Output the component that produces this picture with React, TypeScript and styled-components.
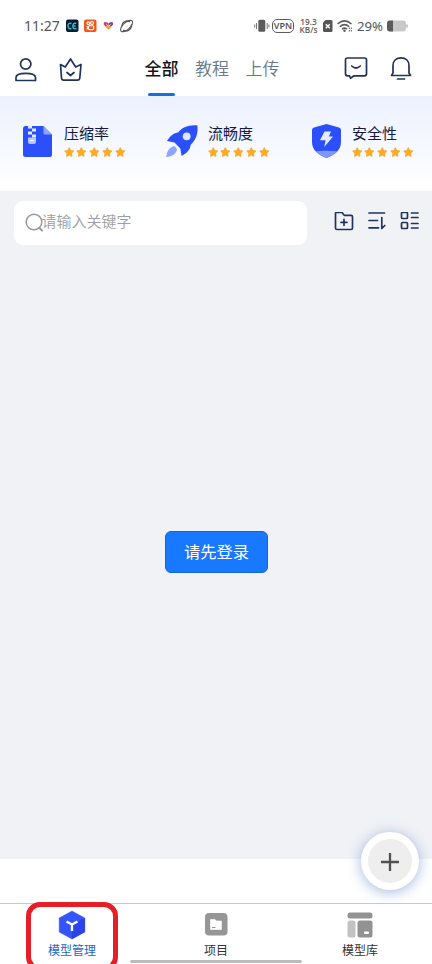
import React from "react";
import styled, { createGlobalStyle } from "styled-components";

const GlobalStyle = createGlobalStyle`
  *, *::before, *::after { box-sizing: border-box; }
  body { margin: 0; background: #fff; }
  svg { display: block; flex: none; }
  button { border: 0; padding: 0; background: none; font: inherit; color: inherit; }
`;

const NAVY = "#20345a";

const Screen = styled.div`
  width: 432px;
  height: 964px;
  overflow: hidden;
  display: flex;
  flex-direction: column;
  background: #fff;
  font-family: Roboto, "Noto Sans CJK SC", sans-serif;
`;

const StatusBar = styled.div`
  height: 42px;
  flex: none;
  padding: 10px 24px 0 24px;
  display: flex;
  align-items: center;
  color: #555;
  font-family: "Noto Sans", sans-serif;
`;
const StatusText = styled.span<{ $size: number; $width: number; $ml?: number }>`
  font-size: ${(p) => p.$size}px;
  width: ${(p) => p.$width}px;
  margin-left: ${(p) => p.$ml ?? 0}px;
  flex: none;
  line-height: 20px;
  white-space: nowrap;
`;
const AppIcons = styled.div`
  display: flex;
  margin: 0 auto 0 6px;
`;
const Vpn = styled.span`
  width: 22px;
  height: 14px;
  flex: none;
  margin-left: 2px;
  border: 1.4px solid #5c5c5c;
  border-radius: 5px;
  font-size: 9px;
  font-weight: 600;
  line-height: 11px;
  text-align: center;
`;
const Speed = styled.div`
  width: 19px;
  flex: none;
  margin: 0 3px 0 5px;
  display: flex;
  flex-direction: column;
  align-items: center;
  font-size: 8.3px;
  font-weight: 500;
  line-height: 8px;
  white-space: nowrap;
`;
const Battery = styled.svg`
  margin-left: 3px;
`;

const Header = styled.header`
  height: 54px;
  flex: none;
  display: flex;
  align-items: stretch;
  padding: 0 19px 0 13px;
`;
const IconGroup = styled.div<{ $gap: number }>`
  display: flex;
  align-items: center;
  gap: ${(p) => p.$gap}px;
`;
const Tabs = styled.nav`
  display: flex;
  gap: 16.5px;
  margin: 0 auto 0 61.5px;
`;
const Tab = styled.button<{ $active?: boolean }>`
  position: relative;
  display: flex;
  align-items: center;
  font-size: 17px;
  line-height: 54px;
  font-weight: ${(p) => (p.$active ? 500 : 350)};
  color: ${(p) => (p.$active ? "#10131c" : "#68788a")};
  &::after {
    content: "";
    display: ${(p) => (p.$active ? "block" : "none")};
    position: absolute;
    left: 3.5px;
    bottom: 0;
    width: 27px;
    height: 3px;
    border-radius: 2px;
    background: #176fdc;
  }
`;

const Banner = styled.section`
  height: 95px;
  flex: none;
  display: grid;
  grid-template-columns: repeat(3, 144px);
  background: linear-gradient(#edf1fe, #f5f8ff 50%, #fefeff 92%);
`;
const Feature = styled.div`
  display: flex;
  align-items: flex-start;
  padding: 27px 0 0 22px;
  gap: 10px;
`;
const FeatureTitle = styled.div`
  font-size: 15px;
  line-height: 20px;
  padding-top: 1px;
  font-weight: 400;
  color: #14193f;
`;
const Stars = styled.div`
  display: flex;
  gap: 2.25px;
  margin: 3px 0 0 -0.5px;
`;

const Content = styled.main`
  height: 668px;
  flex: none;
  display: flex;
  flex-direction: column;
  background: #f1f2f6;
`;
const Toolbar = styled.div`
  display: flex;
  align-items: center;
  height: 63px;
  padding: 0 11px 0 14px;
`;
const SearchBox = styled.div`
  width: 292.5px;
  height: 44px;
  border-radius: 9px;
  background: #fff;
  display: flex;
  align-items: center;
  padding-left: 11px;
  margin-right: auto;
  color: #9c9ea2;
  font-size: 15px;
  line-height: 20px;
  font-weight: 350;
`;
const Placeholder = styled.span`
  margin: -1px 0 0 -1.5px;
`;
const Empty = styled.div`
  flex: 1;
  display: flex;
  justify-content: center;
  align-items: flex-start;
  padding: 277px 0 0 1px;
`;
const LoginButton = styled.button`
  width: 103px;
  height: 42px;
  border: 1px solid #1466d2;
  border-radius: 6px;
  background: #1878ff;
  color: #fff;
  font-size: 16.3px;
  line-height: 40px;
  padding-top: 1px;
  text-align: center;
`;

const Footer = styled.div`
  position: relative;
  height: 44px;
  flex: none;
`;
const Fab = styled.button`
  position: absolute;
  right: 13px;
  top: -27px;
  width: 58px;
  height: 58px;
  border-radius: 50%;
  border: 7px solid #fff;
  background: #eee;
  box-shadow: 0 2px 14px rgba(60, 105, 190, 0.48);
  display: flex;
  align-items: center;
  justify-content: center;
`;

const BottomNav = styled.nav`
  position: relative;
  height: 61px;
  flex: none;
  display: grid;
  grid-template-columns: repeat(3, 144px);
  border-top: 1px solid #c9c9c9;
`;
const NavItem = styled.button<{ $active?: boolean }>`
  display: flex;
  flex-direction: column;
  align-items: center;
  justify-content: flex-start;
  padding-top: 6px;
  gap: 2px;
  font-size: 12px;
  line-height: 18px;
  color: ${(p) => (p.$active ? "#1a68c8" : "#333")};
`;
const Highlight = styled.div`
  position: absolute;
  left: 26px;
  top: -2px;
  width: 92px;
  height: 69px;
  border: 5px solid #e61e28;
  border-radius: 14px;
`;
const HomeIndicator = styled.div`
  position: absolute;
  left: 130px;
  bottom: 1px;
  width: 172px;
  height: 3px;
  border-radius: 2px;
  background: #bcbcbc;
`;

type LineIconProps = { box: string; w: number; h: number; children: React.ReactNode; color?: string; sw?: number };
const LineIcon = ({ box, w, h, children, color = NAVY, sw = 1.7 }: LineIconProps) => (
  <svg width={w} height={h} viewBox={box} fill="none" stroke={color} strokeWidth={sw} strokeLinecap="round" strokeLinejoin="round">
    {children}
  </svg>
);

const Star = () => (
  <svg width="10.500" height="10.500" viewBox="0 0 10 10">
    <path d="M5 .9 6.25 3.45 9.1 3.85 7.05 5.85 7.5 8.7 5 7.4 2.5 8.7 2.95 5.85.9 3.85 3.75 3.45Z" fill="#fbac26" stroke="#fbac26" strokeWidth="1.1" strokeLinejoin="round" />
  </svg>
);

const ZipIcon = () => (
  <svg width="32" height="36" viewBox="22 123 32 36">
    <path d="M25.5 126H43.5L52 134.5V154.500Q52 157 49.500 157H25.500Q23 157 23 154.500V128.500Q23 126 25.500 126Z" fill="#2b50fb" />
    <path d="M43.500 126 52 134.500H45Q43.500 134.500 43.500 133Z" fill="#8ea5ff" />
    <path d="M28 126h4v2.500h-4ZM32 128.500h4v3h-4ZM28 131.500h4v3h-4ZM32 134.500h4v3h-4Z" fill="#e3e9ff" />
    <path d="M28 137.500h8v4.500q0 2-2 2h-4q-2 0-2-2Z" fill="#b5c4ff" />
    <path d="M30 140.500h4" stroke="#f2f4ff" strokeWidth="1.200" />
  </svg>
);
const RocketIcon = () => (
  <svg width="32" height="36" viewBox="166 123 32 36">
    <path d="M197.300 125.300C188 124.500 182 127.500 178 132.500C174.500 132.500 170 136 167 141L174.500 142.500L180.300 148.500L181.600 156C187 153 190.300 149.500 190.600 145C196 140 198.500 133 197.300 125.300Z" fill="#2b50fb" />
    <circle cx="186.700" cy="136.300" r="3.900" fill="#dfe6ff" />
    <path d="M174 146C168.500 147.500 167 152 166.200 157C171 156.500 175.500 155 177 149.500Q176 146.500 174 146Z" fill="#8ea5ff" />
  </svg>
);
const ShieldIcon = () => (
  <svg width="32" height="36" viewBox="310 123 32 36">
    <path d="M326.500 124 339 127.500Q341 128.100 341 130V142C341 150 335 154.500 326.500 158C318 154.500 312 150 312 142V130Q312 128.100 314 127.500Z" fill="#2b50fb" />
    <path d="M315.300 151.300Q326.500 150 337.700 151.300Q333.500 155.300 326.500 158Q319.500 155.300 315.300 151.300Z" fill="#7f98ff" />
    <path d="M324.500 131.500H331L328.800 136.500H333L324.300 147L325.600 140.200H320Z" fill="#e6ecff" />
  </svg>
);

const features = [
  { title: "压缩率", icon: <ZipIcon /> },
  { title: "流畅度", icon: <RocketIcon /> },
  { title: "安全性", icon: <ShieldIcon /> },
];

export default function App() {
  return (
    <Screen>
      <GlobalStyle />
      <StatusBar>
        <StatusText $size={14} $width={36}>11:27</StatusText>
        <AppIcons>
          <svg width="68" height="16" viewBox="66 18 68 16">
            <rect x="66" y="19.500" width="12.500" height="12.500" rx="2" fill="#081c31" />
            <path d="M71.500 23.500Q68 22.500 68 26T71.500 28.500M76.300 23.500Q73 22.500 72.800 26T76.500 28.500M73 26h2.500" fill="none" stroke="#32bdc8" strokeWidth="1.400" />
            <rect x="84" y="19.500" width="12.500" height="12.500" rx="2" fill="#f0561d" />
            <g fill="none" stroke="#fff" strokeWidth="1.100">
              <circle cx="88.300" cy="23.200" r="1.300" />
              <circle cx="92" cy="22.900" r="1.500" />
              <rect x="88.500" y="25.800" width="5.200" height="3.800" rx="1" />
              <path d="m86.700 26 1.800 1.500-1.800 1.800" />
            </g>
            <path d="M108.500 29.500 104 24.800Q103 22.300 105.200 22Q107 21.700 108.500 23.600Z" fill="#d93968" />
            <path d="M108.500 29.500 113 24.800Q113.700 22.300 111.600 22Q110 21.700 108.500 23.600Z" fill="#8b3eb0" />
            <path d="m105.500 26.300 3 3.200 3-3.200-3-1.400Z" fill="#f39a2d" />
            <path d="m106.500 24.300 2 2 2-2" fill="none" stroke="#fff" strokeWidth=".8" />
            <g fill="none" stroke="#5a5a5a" strokeWidth="1.100" strokeLinecap="round">
              <ellipse cx="126.600" cy="26" rx="7.500" ry="3.500" transform="rotate(-42 126.600 26)" />
              <path d="M121.700 26.500C121.700 22.500 126 20 129.500 21.500M123.500 30.500C127.500 32 131.800 29 131.500 25" strokeWidth="1.400" />
            </g>
          </svg>
        </AppIcons>
        <svg width="16" height="16" viewBox="254 18 16 16">
          <rect x="258.300" y="19.800" width="7" height="12" rx="1.500" fill="#5b5b5b" />
          <path d="M256.500 23v6M254.700 24.500v3M267.200 23v6M268.900 24.500v3" stroke="#777" strokeWidth="1" />
        </svg>
        <Vpn>VPN</Vpn>
        <Speed>
          <span>19.3</span>
          <span>KB/s</span>
        </Speed>
        <svg width="34" height="16" viewBox="321 18 34 16">
          <path d="M325.500 20H331Q332.500 20 332.500 21.500V30.500Q332.500 32 331 32H324.500Q323 32 323 30.500V22.500Z" fill="#555" />
          <path d="m325.800 24.300 4 4m0-4-4 4" stroke="#fff" strokeWidth="1.400" />
          <g fill="none" stroke="#5b5b5b" strokeWidth="1.500">
            <path d="M337.500 24Q344.500 17.800 351.500 24M339.800 26.700Q344.500 22.500 349.200 26.700M342 29.200Q344.500 27 347 29.200" />
            <path d="M349.300 27.500v4M351.300 27.500v4" strokeWidth="1" strokeDasharray="1.500 1" />
          </g>
          <circle cx="344.500" cy="30.700" r="1.200" fill="#5b5b5b" />
        </svg>
        <StatusText $size={13.2} $width={26} $ml={2}>29%</StatusText>
        <Battery width="22" height="12" viewBox="386 20 22 12">
          <rect x="387" y="20.500" width="19" height="11" rx="3" fill="#c9c9c9" />
          <path d="M390 20.500h3v11h-3q-3 0-3-3v-5q0-3 3-3Z" fill="#5b5b5b" />
          <path d="M407 24.500v3" stroke="#c9c9c9" strokeWidth="2" />
        </Battery>
      </StatusBar>

      <Header>
        <IconGroup $gap={18}>
          <LineIcon box="13 56 26 26" w={26} h={26}>
            <circle cx="25.700" cy="64" r="5.200" />
            <path d="M16 80.500V77.500Q16 73.300 25.700 73.300T35.500 77.500V80.500Z" />
          </LineIcon>
          <LineIcon box="57 56 26 26" w={26} h={26}>
            <path d="M60.500 64.500 65.300 67 70.500 59 75.700 67 81 64.500 79.800 78Q79.600 80.200 77.500 80.200H63.700Q61.600 80.200 61.500 78Z" />
            <path d="m67 72.500 3.500 3 3.500-3" />
          </LineIcon>
        </IconGroup>
        <Tabs>
          <Tab $active>全部</Tab>
          <Tab>教程</Tab>
          <Tab>上传</Tab>
        </Tabs>
        <IconGroup $gap={19}>
          <LineIcon box="343 56 26 26" w={26} h={26}>
            <path d="M347.500 58H364.500Q366.500 58 366.500 60V73.800Q366.500 75.800 364.500 75.800H354L350.500 78.300 349.500 75.800H347.500Q345.500 75.800 345.500 73.800V60Q345.500 58 347.500 58Z" />
            <path d="M351.700 66Q356 70 360.300 66" />
          </LineIcon>
          <LineIcon box="388 55.500 25 26" w={25} h={26}>
            <path d="M391.500 75H410.500L409 72.500V65C409 60 405.500 57.300 401 57.300S393 60 393 65V72.500Z" />
            <path d="M397.500 78.500h7" />
          </LineIcon>
        </IconGroup>
      </Header>

      <Banner>
        {features.map((f) => (
          <Feature key={f.title}>
            {f.icon}
            <div>
              <FeatureTitle>{f.title}</FeatureTitle>
              <Stars>{[0, 1, 2, 3, 4].map((i) => <Star key={i} />)}</Stars>
            </div>
          </Feature>
        ))}
      </Banner>

      <Content>
        <Toolbar>
          <SearchBox>
            <LineIcon box="25 212.500 18 19" w={18} h={19} color="#96999d" sw={1.5}>
              <circle cx="34" cy="221.500" r="7.800" />
              <path d="m39.500 227.500 2.500 2.500" strokeWidth="2" />
            </LineIcon>
            <Placeholder>请输入关键字</Placeholder>
          </SearchBox>
          <IconGroup $gap={11}>
            <LineIcon box="333.500 212.500 22 22" w={22} h={22}>
              <path d="M337 212.500H342.500L344.700 215.300H351.500Q353 215.300 353 216.800V228Q353 229.500 351.500 229.500H337.500Q336 229.500 336 228V213.500Q336 212.500 337 212.500ZM344.500 219.300v6M341.500 222.300h6" transform="translate(0 .5)" />
            </LineIcon>
            <LineIcon box="366.500 212.500 22 22" w={22} h={22}>
              <path d="M369.500 213.500h15.500M369.500 221h8.500M369.500 228.300h9.500M382.300 218V229L385.300 226" />
            </LineIcon>
            <LineIcon box="399.500 212.500 22 22" w={22} h={22}>
              <rect x="402" y="213" width="6" height="6" rx="1" />
              <rect x="402" y="223" width="6" height="6" rx="1" />
              <path d="M412 213.500h6.500M412 218h6.500M412 224h6.500M412 228.500h6.500" />
            </LineIcon>
          </IconGroup>
        </Toolbar>
        <Empty>
          <LoginButton>请先登录</LoginButton>
        </Empty>
      </Content>

      <Footer>
        <Fab>
          <svg width="20" height="20" viewBox="0 0 20 20">
            <path d="M1 11h18M10 2v18" stroke="#505050" strokeWidth="2.300" />
          </svg>
        </Fab>
      </Footer>

      <BottomNav>
        <NavItem $active>
          <svg width="28" height="30" viewBox="58 910 28 30">
            <path d="M72 911 84.800 918V932L72 939 59.200 932V918Z" fill="#3455fc" stroke="#3455fc" strokeWidth=".5" strokeLinejoin="round" />
            <path d="M84.800 918V932L72 939V925Z" fill="#2a44e8" />
            <path d="m66.500 921.500 5.500 3 5.500-3M72 924.500v6.500" fill="none" stroke="#fff" strokeWidth="2.300" />
          </svg>
          模型管理
        </NavItem>
        <NavItem>
          <svg width="28" height="30" viewBox="202 910 28 30">
            <rect x="205" y="913" width="22.500" height="22.500" rx="4" fill="#969696" />
            <path d="M210.500 919.500h4.500l1.500 1.500h5v8.500h-11Z" fill="#fff" stroke="#fff" strokeWidth=".6" strokeLinejoin="round" />
            <path d="M212 927.500h3.500" stroke="#969696" strokeWidth="1" />
          </svg>
          项目
        </NavItem>
        <NavItem>
          <svg width="28" height="30" viewBox="346 910 28 30">
            <rect x="347.500" y="912.500" width="25" height="6" rx="2.500" fill="#929292" />
            <rect x="347.500" y="920.500" width="8" height="17" rx="2.500" fill="#c2c2c2" />
            <rect x="357.500" y="920.500" width="15" height="17" rx="2.500" fill="#929292" />
            <rect x="364" y="931.500" width="5" height="2.500" rx="1" fill="#fff" />
          </svg>
          模型库
        </NavItem>
        <HomeIndicator />
        <Highlight />
      </BottomNav>
    </Screen>
  );
}
